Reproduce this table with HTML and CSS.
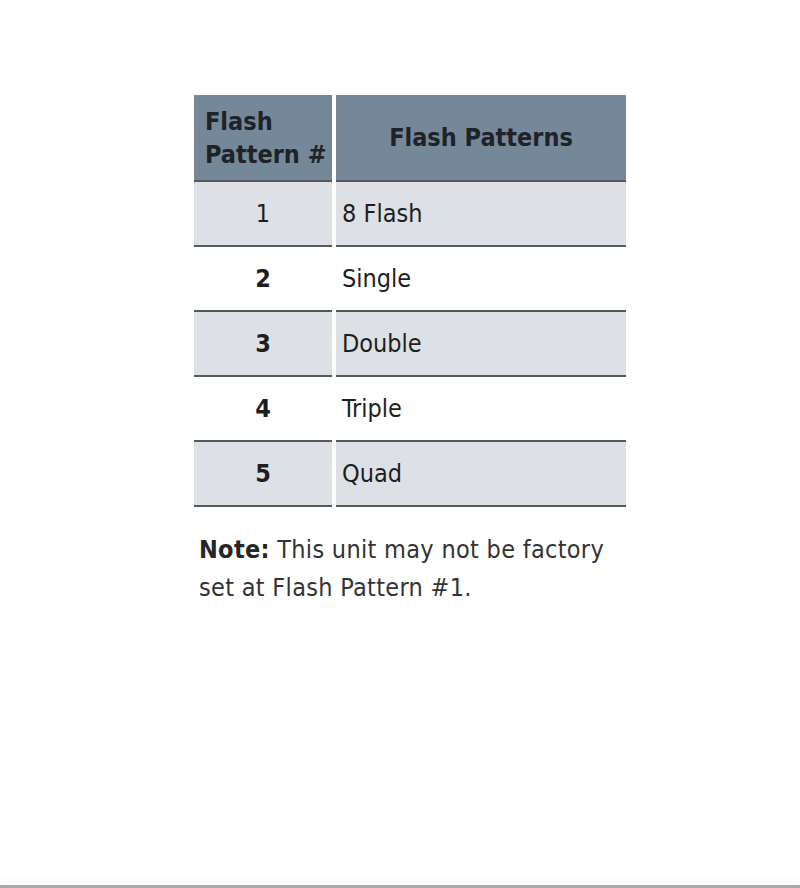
FILE: index.html
```html
<!DOCTYPE html>
<html>
<head>
<meta charset="utf-8">
<link rel="stylesheet" href="styles.css">
</head>
<body>
<div class="page">
  <table class="patterns">
    <thead>
      <tr>
        <th class="num-h">Flash<br>Pattern #</th>
        <th class="name-h">Flash Patterns</th>
      </tr>
    </thead>
    <tbody>
      <tr class="shade"><td class="num light">1</td><td class="name">8 Flash</td></tr>
      <tr><td class="num">2</td><td class="name">Single</td></tr>
      <tr class="shade"><td class="num">3</td><td class="name">Double</td></tr>
      <tr><td class="num">4</td><td class="name">Triple</td></tr>
      <tr class="shade"><td class="num">5</td><td class="name">Quad</td></tr>
    </tbody>
  </table>
  <p class="note"><b>Note:</b> This unit may not be factory<br>set at Flash Pattern #1.</p>
</div>
<div class="bottom-edge"></div>
</body>
</html>
```
FILE: styles.css
```css
html, body {
  margin: 0;
  padding: 0;
  background: #ffffff;
}
body {
  width: 800px;
  height: 888px;
  position: relative;
  overflow: hidden;
  font-family: "DejaVu Sans Condensed", "DejaVu Sans", sans-serif;
  color: #1e1e1e;
}
.page {
  padding: 95px 0 0 194px;
}
.patterns {
  border-collapse: separate;
  border-spacing: 4px 0;
  margin-left: -4px;
  width: 440px;
  table-layout: fixed;
}
.patterns th, .patterns td {
  box-sizing: border-box;
  border-bottom: 2px solid #55595e;
  padding: 0;
}
.patterns th {
  background: #74889a;
  height: 87px;
  font-weight: bold;
  font-size: 25px;
  color: #1f2226;
}
.num-h {
  width: 138px;
  text-align: left;
  padding-left: 11px !important;
  line-height: 33px;
}
.name-h {
  text-align: center;
}
.patterns td {
  height: 65px;
  font-size: 25px;
}
.shade td {
  background: #dde1e5;
}
.num {
  text-align: center;
  font-weight: bold;
}
.num.light {
  font-weight: normal;
}
.name {
  padding-left: 6px !important;
}
.note {
  margin: 24px 0 0 5px;
  font-size: 25px;
  letter-spacing: 0.3px;
  line-height: 38px;
  color: #333333;
}
.note b {
  color: #262626;
}
.bottom-edge {
  position: absolute;
  left: 0;
  right: 0;
  bottom: 0;
  height: 3px;
  background: #a9a9a9;
  box-shadow: 0 -4px 6px rgba(0,0,0,0.06);
}
```
